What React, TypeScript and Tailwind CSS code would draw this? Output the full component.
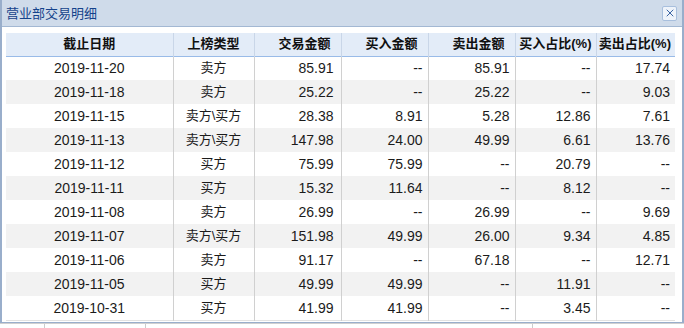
import { X } from 'lucide-react';

type Row = {
  date: string;
  kind: string;
  total: string;
  buy: string;
  sell: string;
  buyPct: string;
  sellPct: string;
};

const ROWS: Row[] = [
  { date: '2019-11-20', kind: '卖方', total: '85.91', buy: '--', sell: '85.91', buyPct: '--', sellPct: '17.74' },
  { date: '2019-11-18', kind: '卖方', total: '25.22', buy: '--', sell: '25.22', buyPct: '--', sellPct: '9.03' },
  { date: '2019-11-15', kind: '卖方\\买方', total: '28.38', buy: '8.91', sell: '5.28', buyPct: '12.86', sellPct: '7.61' },
  { date: '2019-11-13', kind: '卖方\\买方', total: '147.98', buy: '24.00', sell: '49.99', buyPct: '6.61', sellPct: '13.76' },
  { date: '2019-11-12', kind: '买方', total: '75.99', buy: '75.99', sell: '--', buyPct: '20.79', sellPct: '--' },
  { date: '2019-11-11', kind: '买方', total: '15.32', buy: '11.64', sell: '--', buyPct: '8.12', sellPct: '--' },
  { date: '2019-11-08', kind: '卖方', total: '26.99', buy: '--', sell: '26.99', buyPct: '--', sellPct: '9.69' },
  { date: '2019-11-07', kind: '卖方\\买方', total: '151.98', buy: '49.99', sell: '26.00', buyPct: '9.34', sellPct: '4.85' },
  { date: '2019-11-06', kind: '卖方', total: '91.17', buy: '--', sell: '67.18', buyPct: '--', sellPct: '12.71' },
  { date: '2019-11-05', kind: '买方', total: '49.99', buy: '49.99', sell: '--', buyPct: '11.91', sellPct: '--' },
  { date: '2019-10-31', kind: '买方', total: '41.99', buy: '41.99', sell: '--', buyPct: '3.45', sellPct: '--' },
];

const HEADERS = ['截止日期', '上榜类型', '交易金额', '买入金额', '卖出金额', '买入占比(%)', '卖出占比(%)'];
const WIDTHS = ['w-[167px]', 'w-[81px]', 'w-[87px]', 'w-[87px]', 'w-[87px]', 'w-[81px]', 'w-[79px]'];

const FONT = "font-['Liberation_Sans','Noto_Sans_CJK_SC',sans-serif]";

export default function App() {
  return (
    <div className={`w-[684px] h-[328px] overflow-hidden bg-white ${FONT}`}>
      {/* Dialog */}
      <div className="h-[323px] flex flex-col border-x-2 border-b border-[#99aecb] bg-white">
        <div className="h-[27px] flex items-center justify-between pl-[4px] pr-[5px] bg-[#cfdbea] border-b border-[#a3b8d3] shrink-0">
          <span className="text-[13px] text-[#15428b] leading-none">营业部交易明细</span>
          <button className="w-[15px] h-[15px] flex items-center justify-center rounded-[2px] border border-[#a8bfdd] bg-[#eef3fa] text-[#3a64a3]">
            <X size={12} strokeWidth={2} />
          </button>
        </div>

        <div className="flex-1 pl-[4px] pt-[6px] overflow-hidden">
          <table className="table-fixed border-collapse w-[669px] text-[14px] leading-[16px] text-[#1b1b1b]">
            <colgroup>
              {WIDTHS.map((w, i) => (
                <col key={i} className={w} />
              ))}
            </colgroup>
            <thead>
              <tr className="h-[23px] bg-[#e3ecf8] border-b border-[#99bbe8]">
                {HEADERS.map((h, i) => (
                  <th
                    key={h}
                    className={`p-0 text-[13px] font-bold text-[#111] whitespace-nowrap border-r border-[#c9d6e8] last:border-r-0 ${
                      i < 2 ? 'text-center' : 'text-right pr-[4px]'
                    } ${i < 5 && i > 1 ? 'pr-[10px]' : ''}`}
                  >
                    {h}
                  </th>
                ))}
              </tr>
            </thead>
            <tbody>
              {ROWS.map((r, i) => (
                <tr key={r.date} className={`h-[24px] ${i % 2 === 1 ? 'bg-[#f2f2f2]' : 'bg-white'}`}>
                  <td className="p-0 text-center border-r border-[#d0d0d0]">{r.date}</td>
                  <td className="p-0 text-center text-[13px] border-r border-[#d0d0d0]">{r.kind}</td>
                  <td className="p-0 text-right pr-[7px] border-r border-[#d0d0d0]">{r.total}</td>
                  <td className="p-0 text-right pr-[5px] border-r border-[#d0d0d0]">{r.buy}</td>
                  <td className="p-0 text-right pr-[5px] border-r border-[#d0d0d0]">{r.sell}</td>
                  <td className="p-0 text-right pr-[5px] border-r border-[#d0d0d0]">{r.buyPct}</td>
                  <td className="p-0 text-right pr-[5px]">{r.sellPct}</td>
                </tr>
              ))}
              <tr className="h-[2px] border-t border-[#e2e2e2]">
                <td colSpan={7} />
              </tr>
            </tbody>
          </table>
        </div>
      </div>

      {/* Page underneath, peeking below the dialog */}
      <div className="h-[5px] flex border-t border-[#d0d0d0]">
        <div className="w-[45px] border-r border-[#ccc]" />
        <div className="w-[101px] border-r border-[#ccc]" />
        <div className="w-[387px] border-r border-[#ccc]" />
        <div className="flex-1" />
      </div>
    </div>
  );
}
